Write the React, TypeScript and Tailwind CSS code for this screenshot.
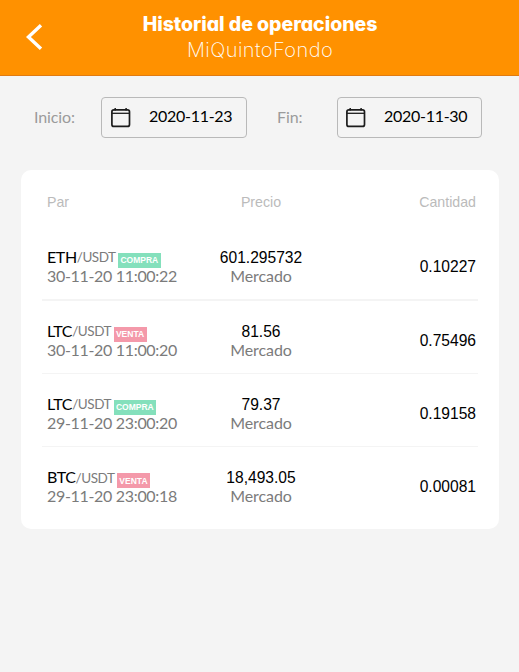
import React from "react";

type Side = "COMPRA" | "VENTA";

interface Operation {
  base: string;
  quote: string;
  side: Side;
  date: string;
  price: string;
  type: string;
  amount: string;
}

const operations: Operation[] = [
  { base: "ETH", quote: "USDT", side: "COMPRA", date: "30-11-20 11:00:22", price: "601.295732", type: "Mercado", amount: "0.10227" },
  { base: "LTC", quote: "USDT", side: "VENTA", date: "30-11-20 11:00:20", price: "81.56", type: "Mercado", amount: "0.75496" },
  { base: "LTC", quote: "USDT", side: "COMPRA", date: "29-11-20 23:00:20", price: "79.37", type: "Mercado", amount: "0.19158" },
  { base: "BTC", quote: "USDT", side: "VENTA", date: "29-11-20 23:00:18", price: "18,493.05", type: "Mercado", amount: "0.00081" },
];

const CalendarIcon: React.FC = () => (
  <svg width="20" height="20" viewBox="0 0 20 20" fill="none" stroke="#1c1c1c">
    <rect x="0.9" y="1.8" width="17.6" height="16.6" rx="2" strokeWidth="1.7" />
    <path d="M0.9 5.3h17.6" strokeWidth="1.3" />
    <path d="M4.2 0v2.5M15.1 0v2.5" strokeWidth="1.5" />
  </svg>
);

interface DateFieldProps {
  label: string;
  value: string;
  className?: string;
}

const DateField: React.FC<DateFieldProps> = ({ label, value, className = "" }) => (
  <div className={`flex items-center justify-between ${className}`}>
    <span className="pb-0.5 text-base tracking-[-0.1px] text-[#9b9b9b]">{label}</span>
    <button className="flex h-[41px] items-center rounded-[4px] border border-[#b9b9b9] text-black">
      <CalendarIcon />
      <span className="ml-[18px] pb-[3px] text-base leading-5 tracking-[-0.28px]">{value}</span>
    </button>
  </div>
);

const SideBadge: React.FC<{ side: Side }> = ({ side }) => (
  <span
    className={`ml-[2.5px] mt-[8px] flex h-[15px] items-center justify-center pt-px font-['Liberation_Sans',sans-serif] text-[8.5px] font-bold leading-none text-white ${
      side === "COMPRA" ? "w-[42.5px] bg-[#84e0bc]" : "w-[33px] bg-[#f499aa]"
    }`}
  >
    {side}
  </span>
);

const OperationRow: React.FC<{ op: Operation }> = ({ op }) => (
  <li className="grid h-[73px] grid-cols-[150px_1fr_150px] items-center border-b border-[#f4f4f4] pl-[5px] pr-[2px] pt-[7px] first:h-[74px] first:border-b-2 last:h-[74px] last:border-b-0 last:pt-[6px]">
    <div className="pb-[2px]">
      <div className="flex h-[19px] items-center">
        <span className="text-base/[19px] tracking-[-0.4px] text-black">{op.base}</span>
        <span className="pt-[3px] text-[13.5px]/[19px] tracking-[-0.45px] text-[#7b7b7b]">/{op.quote}</span>
        <SideBadge side={op.side} />
      </div>
      <div className="text-base/[19px] tracking-[-0.32px] text-[#7b7b7b]">{op.date}</div>
    </div>
    <div className="pb-px pr-px text-center">
      <div className="font-['Liberation_Sans',sans-serif] text-[15.6px]/[19px] text-black">{op.price}</div>
      <div className="text-base/[18px] tracking-[-0.1px] text-[#7b7b7b]">{op.type}</div>
    </div>
    <div className="text-right font-['Liberation_Sans',sans-serif] text-[15.6px] text-black">{op.amount}</div>
  </li>
);

const App: React.FC = () => {
  return (
    <div className="min-h-screen bg-[#f4f4f4] font-['Lato',sans-serif]">
      <header className="grid h-[76px] grid-cols-[60px_1fr_60px] border-b border-[#e07b12] bg-[#ff9100] text-white">
        <button aria-label="Volver" className="flex items-start pl-[26px] pt-[23px]">
          <svg width="17" height="28" viewBox="0 0 17 28" fill="none" stroke="currentColor" strokeWidth="3.4">
            <path d="M15 2.2L2.4 14 15 25.8" />
          </svg>
        </button>
        <div className="pt-[11px] text-center font-['Gilroy','Inter',sans-serif] leading-[26px] [font-feature-settings:'cv11']">
          <h1 className="whitespace-nowrap pl-px text-[19.5px] font-extrabold tracking-[-0.05px]">Historial de operaciones</h1>
          <p className="pl-px text-[20px] font-extralight tracking-[0.45px]">MiQuintoFondo</p>
        </div>
      </header>

      <div className="flex pl-[34px] pt-[21px]">
        <DateField label="Inicio:" value="2020-11-23" className="w-[213px] [&>button]:w-[146px] [&>button]:pl-[9px]" />
        <DateField label="Fin:" value="2020-11-30" className="ml-[30px] w-[205px] [&>button]:w-[145px] [&>button]:pl-[8px]" />
      </div>

      <main className="mx-[21px] mt-[32px] mr-[20px] h-[359px] rounded-[10px] bg-white px-[21px]">
        <div className="grid h-[57px] grid-cols-[150px_1fr_150px] pl-[5px] pr-[2px] pt-[22px] font-['Liberation_Sans',sans-serif] text-[14.2px] leading-5 text-[#bbbbbb]">
          <span>Par</span>
          <span className="pr-px text-center">Precio</span>
          <span className="text-right">Cantidad</span>
        </div>
        <ul>
          {operations.map((op) => (
            <OperationRow key={op.date} op={op} />
          ))}
        </ul>
      </main>
    </div>
  );
};

export default App;
